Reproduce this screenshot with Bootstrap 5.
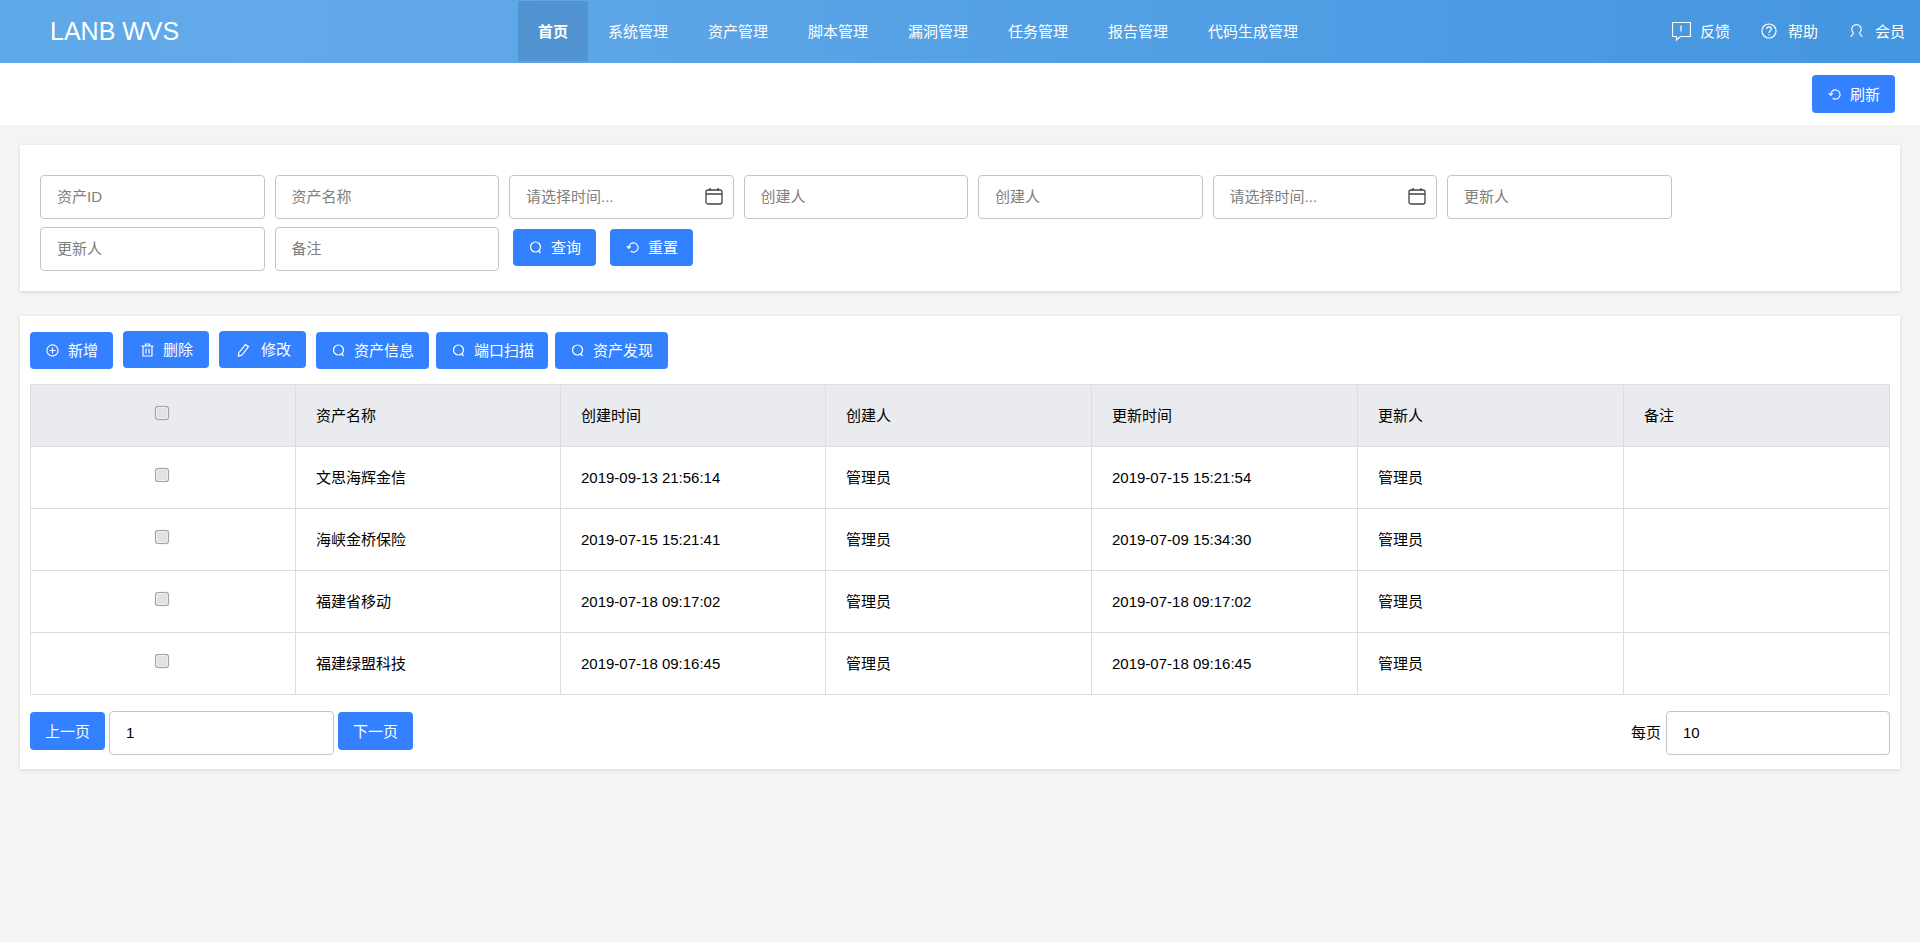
<!DOCTYPE html>
<html lang="zh-CN">
<head>
<meta charset="utf-8">
<title>LANB WVS</title>
<link href="https://cdn.jsdelivr.net/npm/bootstrap@5.3.0/dist/css/bootstrap.min.css" rel="stylesheet">
<style>
html,body{height:100%}
body{background:#f4f4f4;font-family:"Liberation Sans","Noto Sans CJK SC",sans-serif;font-size:15px;color:#000;}
.topbar{height:63px;padding:1px 15px 2px 50px;background:linear-gradient(90deg,#5fa8e8 0%,#62a9e9 15%,#4496e0 100%);flex-wrap:nowrap;align-items:stretch;color:#fff}
.brand{width:468px;font-size:25px;line-height:60px;color:#fff;padding:0;margin:0;text-decoration:none}
.menu-link{display:flex;align-items:center;height:60px;padding:2px 20px 0;color:#fff;font-size:15px;text-decoration:none}
.menu-link.is-on{background:#5294d2;font-weight:700}
.tool-link{display:flex;align-items:center;color:#fff;text-decoration:none;font-size:15px;height:60px;padding-top:2px}
.tool-link svg{flex:none;margin-right:11px;margin-top:-3px}
.tool-link svg.ico-talk{margin-right:9px}
.topbar svg,.act svg{fill:none;stroke:#fff;stroke-width:1.2}
.tools{gap:31px}
.refresh-strip{height:62px;background:#fff;padding:12px 25px 0 0}
.act{background:#3381ff;border:0;color:#fff;font-size:15px;height:37px;padding:0 15px 0 16px;border-radius:4px;display:inline-flex;align-items:center;white-space:nowrap;line-height:1}
.act:hover,.act:focus{background:#3381ff;color:#fff}
.act svg{flex:none;margin-right:9px}
.tall{height:38px}
.sheet{background:#fff;border:0;border-radius:0;margin:0 20px;box-shadow:0 1px 4px rgba(0,0,0,.12)}
.filter{margin-top:20px;height:146px;padding:30px 20px 0 20px;column-gap:10px;row-gap:8px}
.field{width:224.5px;height:44px;flex:none;position:relative}
.field .form-control,.pager-input{height:44px;border:1px solid #c5c3cf;border-radius:4px;padding:0 16px 2px;font-size:15px;color:#000;box-shadow:none;width:100%}
.form-control::placeholder{color:#808080;opacity:1}
.cal{position:absolute;right:11px;top:12px;width:18px;height:18px;fill:none;stroke:#444;stroke-width:1.3}
.filter-btns{margin:2px 0 0 4px;gap:14px}
.list-sheet{margin-top:25px;height:453px;padding:16px 10px 0}
.toolbar{height:52px;column-gap:10px}
.toolbar .tight{margin-left:-3px}
.toolbar .slim{padding-right:14px}
.up1{margin-top:-1px;padding:0 16px 0 18px}
.up1.wide{padding-right:15px}
.up1.wide svg{margin-right:11px}
.data{table-layout:fixed;width:100%;height:310px;margin:0;border-color:#dcdce2;font-size:15px;color:#000}
.data th,.data td{padding:2px 20px 0;vertical-align:middle;font-weight:400;height:62px;color:#000;border-color:#dcdce2;box-shadow:none}
.data thead th{background:#eaebef}
.data th:nth-child(-n+3){width:265px}
.data th:first-child,.data td:first-child{text-align:center;padding:0 21px 0 19px}
.tick{appearance:none;-webkit-appearance:none;display:block;width:14px;height:14px;margin:0 auto 6px;background:#e2e2e2;border:1px solid #a4a4a4;border-radius:3px;box-shadow:inset 0 0 0 1px #efefef,0 0 1px #aaa}
.pager{margin-top:16px;height:44px}
.pager-input{width:225px;flex:none;margin:0 4px}
.pager-right .pager-input{margin:0 0 0 5px;width:224px}
.pager .act{padding:0;width:75px;justify-content:center;margin-bottom:4px}
</style>
</head>
<body>
<nav class="navbar topbar">
  <a class="brand" href="#">LANB WVS</a>
  <div class="d-flex">
    <a class="menu-link is-on" href="#">首页</a>
    <a class="menu-link" href="#">系统管理</a>
    <a class="menu-link" href="#">资产管理</a>
    <a class="menu-link" href="#">脚本管理</a>
    <a class="menu-link" href="#">漏洞管理</a>
    <a class="menu-link" href="#">任务管理</a>
    <a class="menu-link" href="#">报告管理</a>
    <a class="menu-link" href="#">代码生成管理</a>
  </div>
  <div class="d-flex tools ms-auto">
    <a class="tool-link" href="#"><svg class="ico-talk" width="19" height="20" viewBox="0 0 19 20"><path d="M.5 1.500h18v14H8.500l-4 3.500v-3.500h-4z"/><path d="M9 4.500v6"/></svg>反馈</a>
    <a class="tool-link" href="#"><svg width="16" height="16" viewBox="0 0 17 17"><circle cx="8.500" cy="8.500" r="7.500"/><path d="M6 6.500c0-3.200 5-3.200 5 0 0 2-2.500 2-2.500 4"/><path d="M8.500 12v1.200"/></svg>帮助</a>
    <a class="tool-link" href="#"><svg width="15" height="16" viewBox="0 0 16 16"><path d="M5.200 10.300a5 5 0 1 1 5.600 0M5.200 10.300 1.800 14M10.800 10.300 14.200 14"/></svg>会员</a>
  </div>
</nav>

<div class="refresh-strip d-flex justify-content-end align-items-start">
  <button class="btn act tall" type="button"><svg width="13" height="13" viewBox="0 0 14 14"><path d="M3 7a5 5 0 1 1 2 4"/><path d="M.8 5.500 3 8l2.200-2.500"/></svg>刷新</button>
</div>

<section class="sheet filter d-flex flex-wrap align-content-start">
  <div class="field"><input class="form-control" placeholder="资产ID"></div>
  <div class="field"><input class="form-control" placeholder="资产名称"></div>
  <div class="field"><input class="form-control" placeholder="请选择时间..."><svg class="cal" viewBox="0 0 18 18"><rect x="1" y="3" width="16" height="14" rx="2"/><path d="M1 7h16M5 1v3M13 1v3"/></svg></div>
  <div class="field"><input class="form-control" placeholder="创建人"></div>
  <div class="field"><input class="form-control" placeholder="创建人"></div>
  <div class="field"><input class="form-control" placeholder="请选择时间..."><svg class="cal" viewBox="0 0 18 18"><rect x="1" y="3" width="16" height="14" rx="2"/><path d="M1 7h16M5 1v3M13 1v3"/></svg></div>
  <div class="field"><input class="form-control" placeholder="更新人"></div>
  <div class="field"><input class="form-control" placeholder="更新人"></div>
  <div class="field"><input class="form-control" placeholder="备注"></div>
  <div class="d-flex filter-btns align-items-start">
    <button class="btn act" type="button"><svg width="13" height="13" viewBox="0 0 13 13"><circle cx="6.500" cy="6" r="5"/><path d="M9.800 10l1.700 2"/></svg>查询</button>
    <button class="btn act" type="button"><svg width="13" height="13" viewBox="0 0 14 14"><path d="M3 7a5 5 0 1 1 2 4"/><path d="M.8 5.500 3 8l2.200-2.500"/></svg>重置</button>
  </div>
</section>

<section class="sheet list-sheet">
  <div class="toolbar d-flex align-items-start">
    <button class="btn act" type="button"><svg width="13" height="13" viewBox="0 0 14 14"><circle cx="7" cy="7" r="6"/><path d="M7 3.800v6.400M3.800 7h6.400"/></svg>新增</button>
    <button class="btn act up1" type="button"><svg width="13" height="14" viewBox="0 0 13 14"><path d="M.5 3h12M4.500 3V1h4v2M2 3v10h9V3M5 5.500v5M8 5.500v5"/></svg>删除</button>
    <button class="btn act up1 wide" type="button"><svg width="13" height="14" viewBox="0 0 13 14"><path d="M8.500 1.500l3 2.200-6.500 8.300-3.500 1.200.3-3.500z"/></svg>修改</button>
    <button class="btn act" type="button"><svg width="13" height="13" viewBox="0 0 13 13"><circle cx="6.500" cy="6" r="5"/><path d="M9.800 10l1.700 2"/></svg>资产信息</button>
    <button class="btn act tight slim" type="button"><svg width="13" height="13" viewBox="0 0 13 13"><circle cx="6.500" cy="6" r="5"/><path d="M9.800 10l1.700 2"/></svg>端口扫描</button>
    <button class="btn act tight" type="button"><svg width="13" height="13" viewBox="0 0 13 13"><circle cx="6.500" cy="6" r="5"/><path d="M9.800 10l1.700 2"/></svg>资产发现</button>
  </div>
  <table class="table table-bordered data">
    <thead><tr><th><input class="tick" type="checkbox"></th><th>资产名称</th><th>创建时间</th><th>创建人</th><th>更新时间</th><th>更新人</th><th>备注</th></tr></thead>
    <tbody>
      <tr><td><input class="tick" type="checkbox"></td><td>文思海辉金信</td><td>2019-09-13 21:56:14</td><td>管理员</td><td>2019-07-15 15:21:54</td><td>管理员</td><td></td></tr>
      <tr><td><input class="tick" type="checkbox"></td><td>海峡金桥保险</td><td>2019-07-15 15:21:41</td><td>管理员</td><td>2019-07-09 15:34:30</td><td>管理员</td><td></td></tr>
      <tr><td><input class="tick" type="checkbox"></td><td>福建省移动</td><td>2019-07-18 09:17:02</td><td>管理员</td><td>2019-07-18 09:17:02</td><td>管理员</td><td></td></tr>
      <tr><td><input class="tick" type="checkbox"></td><td>福建绿盟科技</td><td>2019-07-18 09:16:45</td><td>管理员</td><td>2019-07-18 09:16:45</td><td>管理员</td><td></td></tr>
    </tbody>
  </table>
  <div class="pager d-flex align-items-center justify-content-between">
    <div class="d-flex align-items-center">
      <button class="btn act tall" type="button">上一页</button>
      <input class="form-control pager-input" value="1">
      <button class="btn act tall" type="button">下一页</button>
    </div>
    <div class="d-flex align-items-center pager-right">
      <span>每页</span>
      <input class="form-control pager-input" value="10">
    </div>
  </div>
</section>
</body>
</html>
